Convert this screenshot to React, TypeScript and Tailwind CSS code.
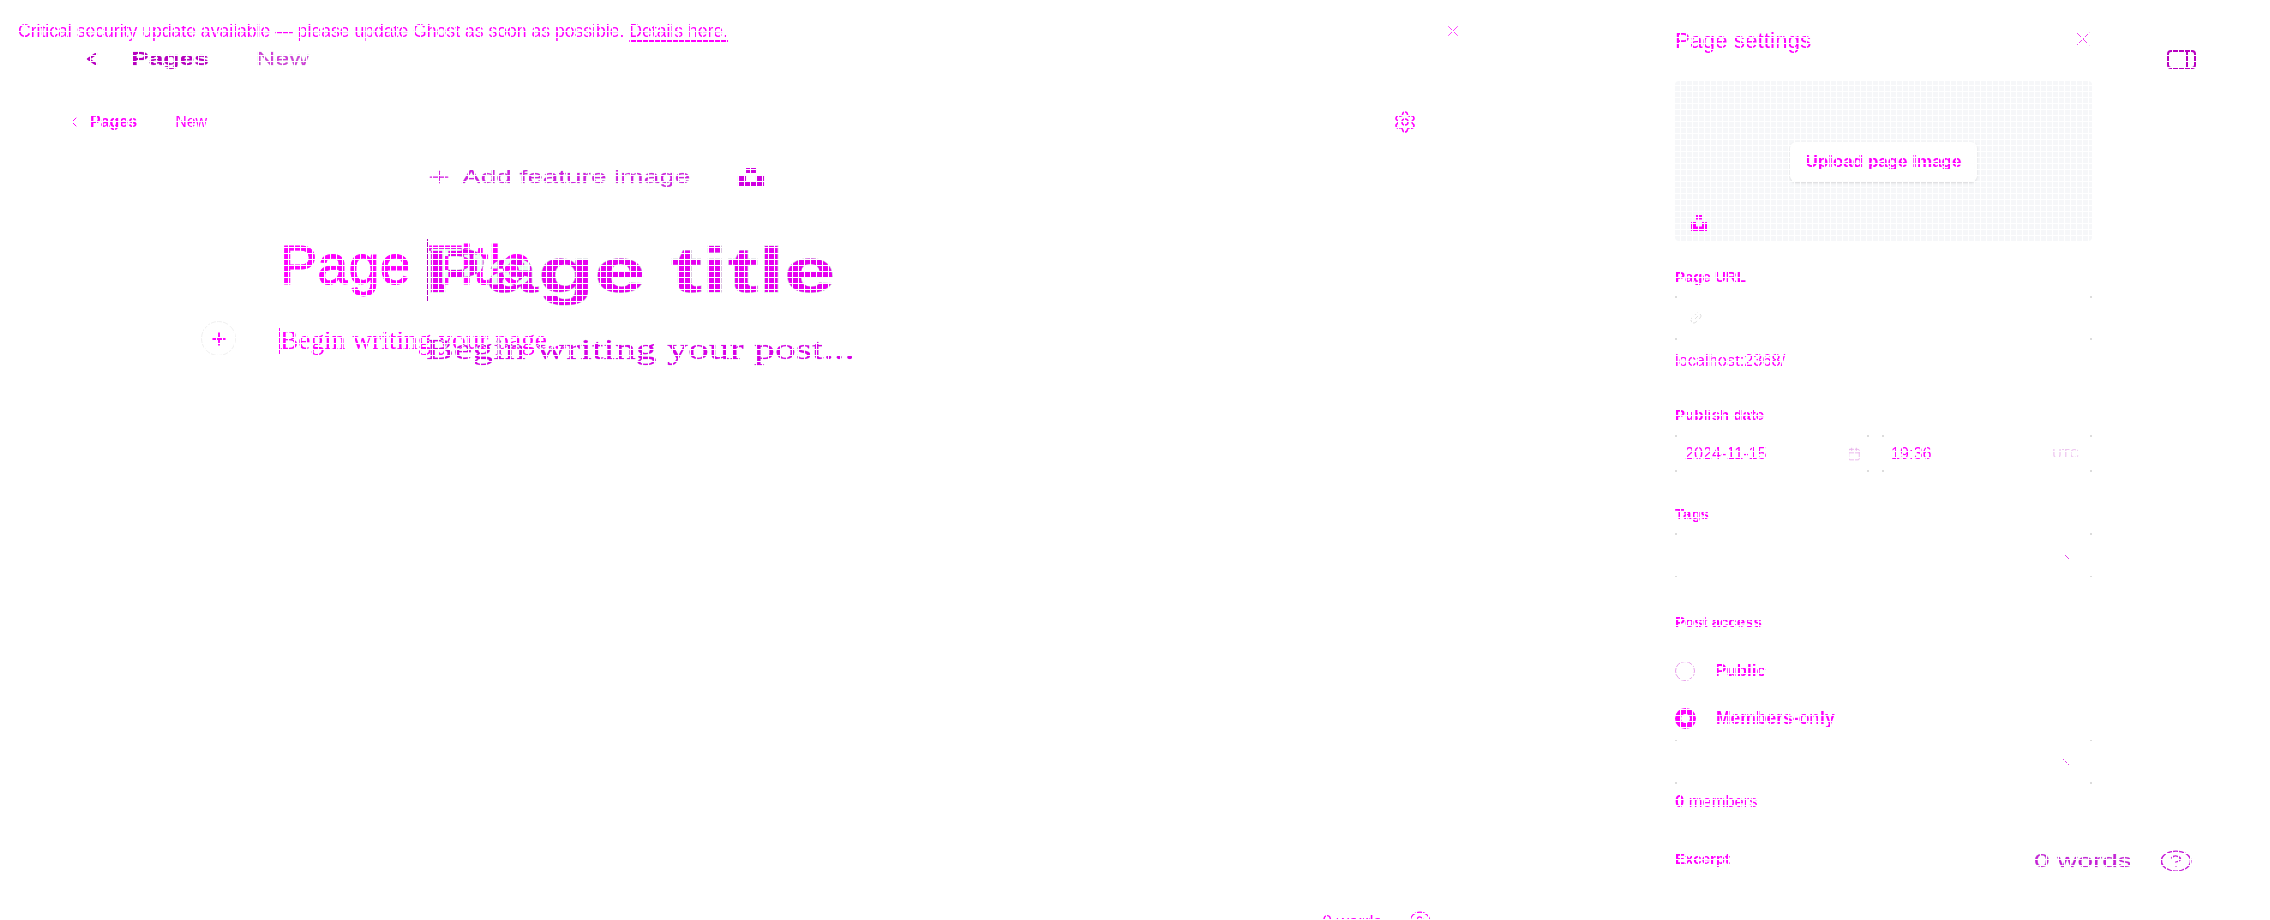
import { ChevronLeft, CircleHelp, Link2, Calendar, Plus, Settings, X } from "lucide-react";

const sans = "font-['Liberation_Sans',Arial,sans-serif]";
const fieldCorners =
  "bg-[linear-gradient(#dcdcdc,#dcdcdc),linear-gradient(#dcdcdc,#dcdcdc),linear-gradient(#dcdcdc,#dcdcdc),linear-gradient(#dcdcdc,#dcdcdc)] bg-[size:2px_2px] bg-[position:0_0,100%_0,0_100%,100%_100%] bg-no-repeat";

function UnsplashIcon({ className }: { className: string }) {
  return (
    <svg viewBox="0 0 32 32" className={className} fill="currentColor">
      <path d="M10 9V0h12v9H10zm12 5h10v18H0V14h10v9h12v-9z" />
    </svg>
  );
}

function SelectTick() {
  return (
    <svg viewBox="0 0 8 8" className="h-[8px] w-[8px] text-[#e040e8]" fill="none" stroke="currentColor">
      <path d="M1 1l6 6" />
    </svg>
  );
}

function Wide({ className, children }: { className: string; children: React.ReactNode }) {
  return (
    <span className={`inline-block origin-left scale-x-[1.47] whitespace-nowrap [paint-order:stroke_fill] ${className}`}>
      {children}
    </span>
  );
}

function WideLayer() {
  return (
    <div className={`col-start-1 row-start-1 flex h-[920px] flex-col ${sans}`}>
      <div className="mt-[39px] flex h-[40px] items-center">
        <ChevronLeft className="ml-[82px] h-[20px] w-[20px] scale-x-[1.47] text-[#b800c0]" strokeWidth={2.5} />
        <div className="ml-[29px] w-[125px] text-[18px]">
          <Wide className="font-bold text-[#b800c0] [-webkit-text-stroke:0.5px_#d0d3d8]">Pages</Wide>
        </div>
        <div className="text-[18px]">
          <Wide className="text-[#d040d8] [-webkit-text-stroke:0.5px_#d0d3d8]">New</Wide>
        </div>
      </div>
      <div className="mt-[80px] flex h-[36px] items-center pl-[429px]">
        <Plus className="h-[20px] w-[20px] scale-x-[1.47] text-[#d010e0]" strokeWidth={1.5} />
        <div className="ml-[13px] w-[280px] text-[19px]">
          <Wide className="text-[#d020e0] [-webkit-text-stroke:0.5px_#d0d3d8]">Add feature image</Wide>
        </div>
        <UnsplashIcon className="h-[18px] w-[18px] scale-x-[1.47] text-[#d000e0]" />
      </div>
      <div className="mt-[35px] flex h-[80px] items-center pl-[426px] text-[62.8px] leading-[80px] font-bold">
        <div className="h-[62px] w-[2px] bg-[#b000c0]" />
        <div className="ml-[-3px]">
          <Wide className="text-[#e600f0] [-webkit-text-stroke:1px_#d0d3d8]">Page title</Wide>
        </div>
      </div>
      <div className="mt-[20px] pl-[426px] font-['Liberation_Serif',serif] text-[28.4px] leading-[40px]">
        <Wide className="text-[#d800e8] [-webkit-text-stroke:0.4px_#d0d3d8]">Begin writing your post...</Wide>
      </div>
      <div className="flex-1" />
      <div className="mb-[47px] flex h-[24px] items-center pl-[2034px]">
        <div className="w-[130px] text-[19px]">
          <Wide className="text-[#c820d8] [-webkit-text-stroke:0.5px_#d0d3d8]">0 words</Wide>
        </div>
        <CircleHelp className="h-[24px] w-[24px] scale-x-[1.47] text-[#c820d8]" strokeWidth={1.25} />
      </div>
    </div>
  );
}

function SidebarLabel({ children }: { children: React.ReactNode }) {
  return <div className="text-[15px] leading-[20px] font-bold text-[#ff00ff]">{children}</div>;
}

function Sidebar() {
  return (
    <aside className="w-[417px]">
      <div className="flex h-[81px] items-center justify-between pr-[1px]">
        <h2 className="text-[22.5px] text-[#ff00ff]">Page settings</h2>
        <X className="mr-[-4px] mb-[4px] h-[24px] w-[24px] text-[#f040f0]" strokeWidth={1} />
      </div>
      <div className="relative flex h-[160px] items-center justify-center rounded-sm bg-[#f6f7f9] pt-[1px]">
        <div className="flex h-[40px] w-[187px] items-center justify-center rounded-md bg-white text-[17px] font-bold text-[#ff00ff] shadow-sm">
          Upload page image
        </div>
        <UnsplashIcon className="absolute bottom-[10px] left-[16px] h-[16px] w-[16px] text-[#ff00ff]" />
      </div>
      <div className="mt-[26px]">
        <SidebarLabel>Page URL</SidebarLabel>
      </div>
      <div className={`mt-[9px] flex h-[44px] items-center pl-[14px] ${fieldCorners}`}>
        <Link2 className="h-[14px] w-[14px] -rotate-45 text-[#dcdcdc]" strokeWidth={1.5} />
      </div>
      <div className="mt-[10px] text-[16.4px] leading-[20px] text-[#ff00ff]">localhost:2368/</div>
      <div className="mt-[35px]">
        <SidebarLabel>Publish date</SidebarLabel>
      </div>
      <div className="mt-[10px] flex h-[37px] gap-[13px] text-[16.2px] text-[#ff00ff]">
        <div className={`flex w-[194px] items-center justify-between pl-[10px] pr-[8px] ${fieldCorners}`}>
          2024-11-15
          <Calendar className="h-[14px] w-[14px] text-[#e8b0ea]" strokeWidth={1.5} />
        </div>
        <div className={`flex flex-1 items-center justify-between pl-[9px] pr-[13px] ${fieldCorners}`}>
          19:36
          <span className="text-[13px] text-[#eec8f0]">UTC</span>
        </div>
      </div>
      <div className="mt-[32px]">
        <SidebarLabel>Tags</SidebarLabel>
      </div>
      <div className={`mt-[9px] flex h-[45px] items-center justify-end pr-[22px] ${fieldCorners}`}>
        <SelectTick />
      </div>
      <div className="mt-[34px]">
        <SidebarLabel>Post access</SidebarLabel>
      </div>
      <div className="mt-[27px] flex h-[24px] items-center gap-[20px] text-[17px] font-bold text-[#ff00ff]">
        <div className="h-[20px] w-[20px] rounded-full border border-[#e8a0ea] bg-white" />
        Public
      </div>
      <div className="mt-[23px] flex h-[24px] items-center gap-[20px] text-[17.5px] font-bold text-[#ff00ff]">
        <div className="h-[21px] w-[21px] rounded-full border-[6px] border-[#ff00ff] bg-white" />
        Members-only
      </div>
      <div className={`mt-[9px] flex h-[45px] items-center justify-end pr-[22px] ${fieldCorners}`}>
        <SelectTick />
      </div>
      <div className="mt-[7px] text-[16.5px] leading-[20px] text-[#ff00ff]">
        <span className="font-bold">0</span> members
      </div>
      <div className="mt-[38px]">
        <SidebarLabel>Excerpt</SidebarLabel>
      </div>
    </aside>
  );
}

function EditorLayer() {
  return (
    <div className={`col-start-1 row-start-1 flex h-[935px] ${sans}`}>
      <main className="flex w-[1675px] flex-col">
        <div className="flex h-[62px] w-[1462px] items-center justify-between pl-[18px] text-[17.6px] text-[#ff00ff]">
          <span>
            Critical security update available — please update Ghost as soon as possible.{" "}
            <a className="underline decoration-[1.5px] underline-offset-[3px]">Details here.</a>
          </span>
          <X className="h-[18px] w-[18px]" strokeWidth={1} />
        </div>
        <div className="mt-[40px] flex h-[40px] w-[1417px] items-center pl-[66px] text-[16px] text-[#ff00ff]">
          <ChevronLeft className="h-[16px] w-[16px]" strokeWidth={1.5} />
          <span className="ml-[8px] font-bold">Pages</span>
          <span className="ml-[38px]">New</span>
          <Settings className="ml-auto h-[24px] w-[24px]" strokeWidth={1.5} />
        </div>
        <div className="mt-[88px] h-[70px] pl-[280px] text-[56px] leading-[70px] text-[#00ff00] [-webkit-text-stroke:0.8px_#00ff00] [word-spacing:3px] mix-blend-difference">
          Page Title
        </div>
        <div className="relative mt-[21px] flex h-[40px] items-center pl-[279px] font-['Liberation_Serif',serif] text-[27.4px] text-[#00ff00] mix-blend-difference">
          <div className="h-[26px] border-l border-[#00ff00]" />
          Begin writing your page...
        </div>
        <div className="absolute left-[201px] top-[321px] flex h-[35px] w-[35px] items-center justify-center rounded-full border border-[#f0f0f0]">
          <Plus className="h-[20px] w-[20px] text-[#ff00ff]" strokeWidth={2.25} />
        </div>
        <div className="mt-auto flex h-[24px] w-[1432px] items-center justify-end gap-[26px] pb-[2px] text-[17px] text-[#ff00ff]">
          0 words
          <CircleHelp className="h-[24px] w-[24px]" strokeWidth={1.25} />
        </div>
      </main>
      <Sidebar />
      <div className="ml-[75px] mt-[50px]">
        <svg viewBox="0 0 29 19" className="h-[19px] w-[29px] text-[#b800c0]" fill="none" stroke="currentColor" strokeWidth={2}>
          <rect x="1" y="1" width="27" height="17" rx="3" />
          <path d="M20 1v17" />
        </svg>
      </div>
    </div>
  );
}

export default function App() {
  return (
    <div className="relative grid h-[920px] w-[2270px] overflow-hidden bg-white">
      <WideLayer />
      <EditorLayer />
      {/* white lattice that cuts through everything in the picture */}
      <div className="pointer-events-none absolute inset-0 bg-[linear-gradient(to_right,#fff_1px,transparent_1px),linear-gradient(to_bottom,#fff_1px,transparent_1px)] bg-[size:6px_6px] bg-[position:0_1px]" />
    </div>
  );
}
